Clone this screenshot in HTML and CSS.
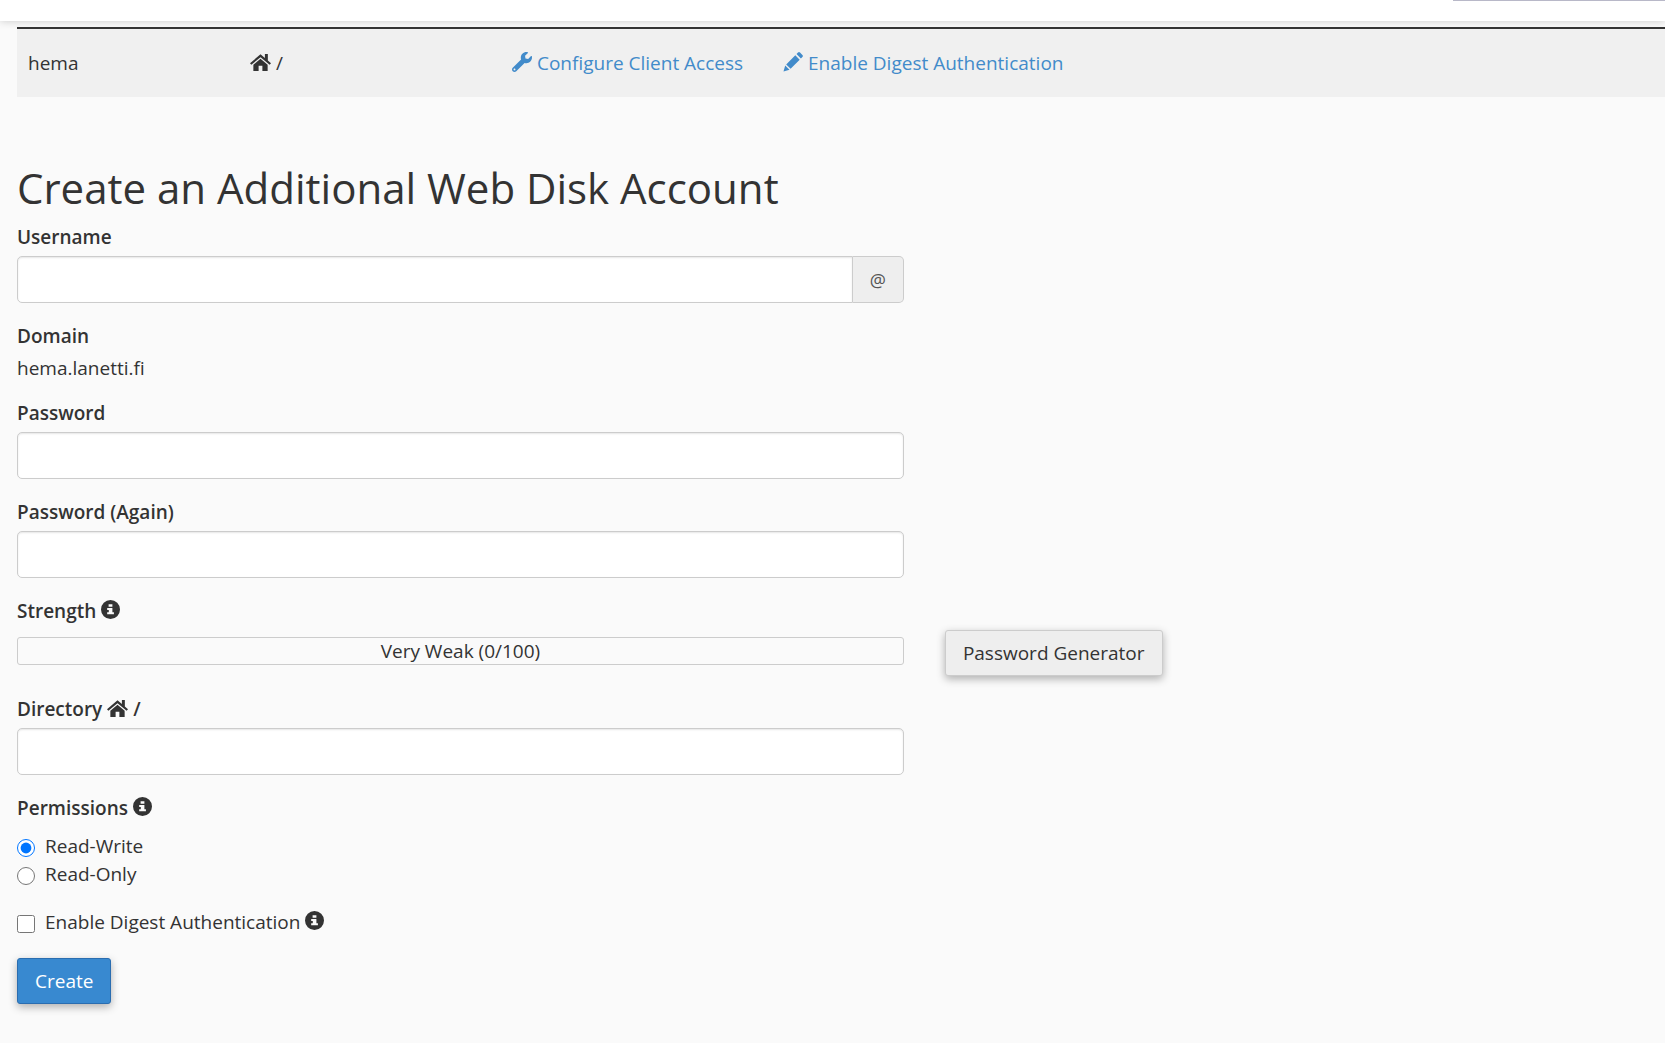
FILE: index.html
```html
<!DOCTYPE html>
<html lang="en">
<head>
    <meta charset="UTF-8">
    <meta name="viewport" content="width=device-width, initial-scale=1.0">
    <title>Web Disk</title>
    <link rel="stylesheet" href="styles.css">
</head>
<body>
    <svg class="icon-defs" aria-hidden="true">
        <symbol id="icon-home" viewBox="0 1 20 16">
            <path d="M10 1.200 0 9.700l1.300 1.500L10 3.900l8.700 7.300 1.300-1.500-3-2.500V1h-2.800v3.800z"/>
            <path d="M10 5.400 3.200 11.100V17h5v-4.800h3.600V17h5v-5.900z"/>
        </symbol>
        <symbol id="icon-wrench" viewBox="0 0 512 512">
            <path d="M507.730 109.100c-2.240-9.030-13.540-12.090-20.120-5.510l-74.360 74.360-67.880-11.310-11.310-67.880 74.360-74.360c6.620-6.620 3.430-17.900-5.660-20.160-47.380-11.740-99.550.91-136.580 37.930-39.640 39.640-50.550 97.100-34.050 147.200L18.740 402.760c-24.990 24.990-24.990 65.510 0 90.500 24.990 24.990 65.510 24.990 90.500 0l213.210-213.210c50.120 16.710 107.470 5.680 147.370-34.220 37.070-37.070 49.700-89.320 37.910-136.730zM64 472c-13.250 0-24-10.750-24-24 0-13.260 10.750-24 24-24s24 10.740 24 24c0 13.250-10.750 24-24 24z"/>
        </symbol>
        <symbol id="icon-pencil" viewBox="0 0 20 20">
            <path d="M.5 19.500l1.700-6 4.300 4.300zM3.200 12.400 12.300 3.300l4.400 4.400-9.100 9.100zM13.500 2.100 15 .6q1-1 2 0l2.400 2.400q1 1 0 2L17.900 6.500z"/>
        </symbol>
        <symbol id="icon-info" viewBox="0 0 20 20">
            <path fill-rule="evenodd" d="M10 0a10 10 0 1 0 0 20 10 10 0 0 0 0-20zM8 4.500h4v2.500H8zM6.500 8.400H12v4.600h1.600v2H6.500v-2h1.700v-2.600H6.500z"/>
        </symbol>
    </svg>

    <header class="topbar">
        <div class="topbar-search"></div>
    </header>

    <main class="content">
        <table class="accounts">
            <tbody>
                <tr>
                    <td class="col-user">hema</td>
                    <td class="col-dir"><svg class="icon icon-house"><use href="#icon-home"/></svg> /</td>
                    <td>
                        <div class="actions">
                            <a href="#"><svg class="icon"><use href="#icon-wrench"/></svg> Configure Client Access</a>
                            <a href="#"><svg class="icon"><use href="#icon-pencil"/></svg> Enable Digest Authentication</a>
                        </div>
                    </td>
                </tr>
            </tbody>
        </table>

        <h2>Create an Additional Web Disk Account</h2>

        <form>
            <div class="field">
                <label for="username">Username</label>
                <div class="input-group">
                    <input type="text" id="username" class="form-control">
                    <span class="addon">@</span>
                </div>
            </div>
            <div class="field field-static">
                <span class="label">Domain</span>
                <div>hema.lanetti.fi</div>
            </div>
            <div class="field">
                <label for="password">Password</label>
                <input type="password" id="password" class="form-control">
            </div>
            <div class="field">
                <label for="password2">Password (Again)</label>
                <input type="password" id="password2" class="form-control">
            </div>
            <div class="strength">
                <div class="strength-meter">
                    <span class="label">Strength <svg class="icon icon-info"><use href="#icon-info"/></svg></span>
                    <div class="meter">Very Weak (0/100)</div>
                </div>
                <button type="button" class="btn">Password Generator</button>
            </div>
            <div class="field">
                <label for="directory">Directory <svg class="icon icon-house"><use href="#icon-home"/></svg> /</label>
                <input type="text" id="directory" class="form-control">
            </div>
            <fieldset>
                <legend>Permissions <svg class="icon icon-info"><use href="#icon-info"/></svg></legend>
                <label class="choice"><input type="radio" name="perms" value="rw" checked> Read-Write</label>
                <label class="choice"><input type="radio" name="perms" value="ro"> Read-Only</label>
            </fieldset>
            <label class="choice choice-digest"><input type="checkbox" name="digest"> <span>Enable Digest Authentication <svg class="icon icon-info"><use href="#icon-info"/></svg></span></label>
            <button type="submit" class="btn btn-primary">Create</button>
        </form>
    </main>
</body>
</html>
```

FILE: styles.css
```css
* {
    box-sizing: border-box;
}
body {
    margin: 0;
    background-color: #fafafa;
    color: #333;
    font-family: "Open Sans", sans-serif;
    font-size: 19px;
    line-height: 28px;
}
.icon-defs {
    display: none;
}
.topbar {
    display: flex;
    justify-content: flex-end;
    height: 21px;
    background-color: #fff;
    box-shadow: 0 0 8px rgba(0, 0, 0, 0.2);
}
.topbar-search {
    width: 212px;
    height: 1px;
    background-color: #b8b8c8;
}
.content {
    padding: 6px 0 38px 17px;
}
.accounts {
    width: 100%;
    border-collapse: separate;
    border-spacing: 0;
    border-top: 2px solid #333;
    background-color: #f0f0f0;
}
.accounts td {
    height: 68px;
    padding: 0 11px;
}
.accounts .col-user {
    width: 222px;
}
.accounts .col-dir {
    width: 262px;
}
.actions {
    display: flex;
    gap: 40px;
}
a {
    color: #428bca;
    text-decoration: none;
}
a:hover {
    text-decoration: underline;
}
.icon {
    width: 20px;
    height: 20px;
    fill: currentColor;
    vertical-align: -2px;
}
.icon-house {
    width: 21px;
    height: 17px;
    vertical-align: -1px;
}
.icon-info {
    width: 19px;
    height: 19px;
    vertical-align: -1px;
}
h2 {
    margin: 63px 0 8px;
    font-size: 42px;
    font-weight: 400;
    line-height: 55px;
}
.field,
.strength-meter {
    width: calc(56% - 36px);
}
.field {
    margin-bottom: 19px;
}
.field > label,
.label,
legend {
    display: block;
    margin-bottom: 5px;
    font-weight: 600;
}
.field-static {
    margin-bottom: 17px;
}
.field-static .label {
    margin-bottom: 4px;
}
.form-control {
    display: block;
    width: 100%;
    height: 47px;
    padding: 8px 16px;
    border: 1px solid #ccc;
    border-radius: 5px;
    background-color: #fff;
    box-shadow: inset 0 1px 2px rgba(0, 0, 0, 0.1);
    color: #555;
    font: inherit;
}
.input-group {
    display: flex;
}
.input-group .form-control {
    flex: 1;
    border-radius: 5px 0 0 5px;
}
.addon {
    display: flex;
    align-items: center;
    justify-content: center;
    width: 51px;
    border: 1px solid #ccc;
    border-left: 0;
    border-radius: 0 5px 5px 0;
    background-color: #eee;
    color: #555;
    font-size: 18px;
}
.strength {
    display: flex;
    align-items: flex-end;
    gap: 41px;
    margin-bottom: 19px;
}
.strength-meter {
    padding-bottom: 11px;
}
.strength .label {
    margin-bottom: 12px;
}
.meter {
    height: 28px;
    border: 1px solid #ccc;
    border-radius: 3px;
    line-height: 26px;
    text-align: center;
}
.btn {
    height: 46px;
    padding: 0 17px;
    border: 1px solid #ccc;
    border-radius: 3px;
    background-color: #eee;
    box-shadow: 0 3px 8px rgba(0, 0, 0, 0.3);
    color: #333;
    font: inherit;
    cursor: pointer;
}
.btn-primary {
    border-color: #2a6db0;
    background-color: #3889d0;
    color: #fff;
}
fieldset {
    margin: 0 0 20px;
    padding: 0;
    border: 0;
}
legend {
    padding: 0;
    margin-bottom: 10px;
}
.choice {
    display: flex;
    align-items: center;
    gap: 10px;
}
.choice input {
    width: 18px;
    height: 18px;
    margin: 4px 0 0;
}
.choice-digest {
    margin-bottom: 22px;
}
```
